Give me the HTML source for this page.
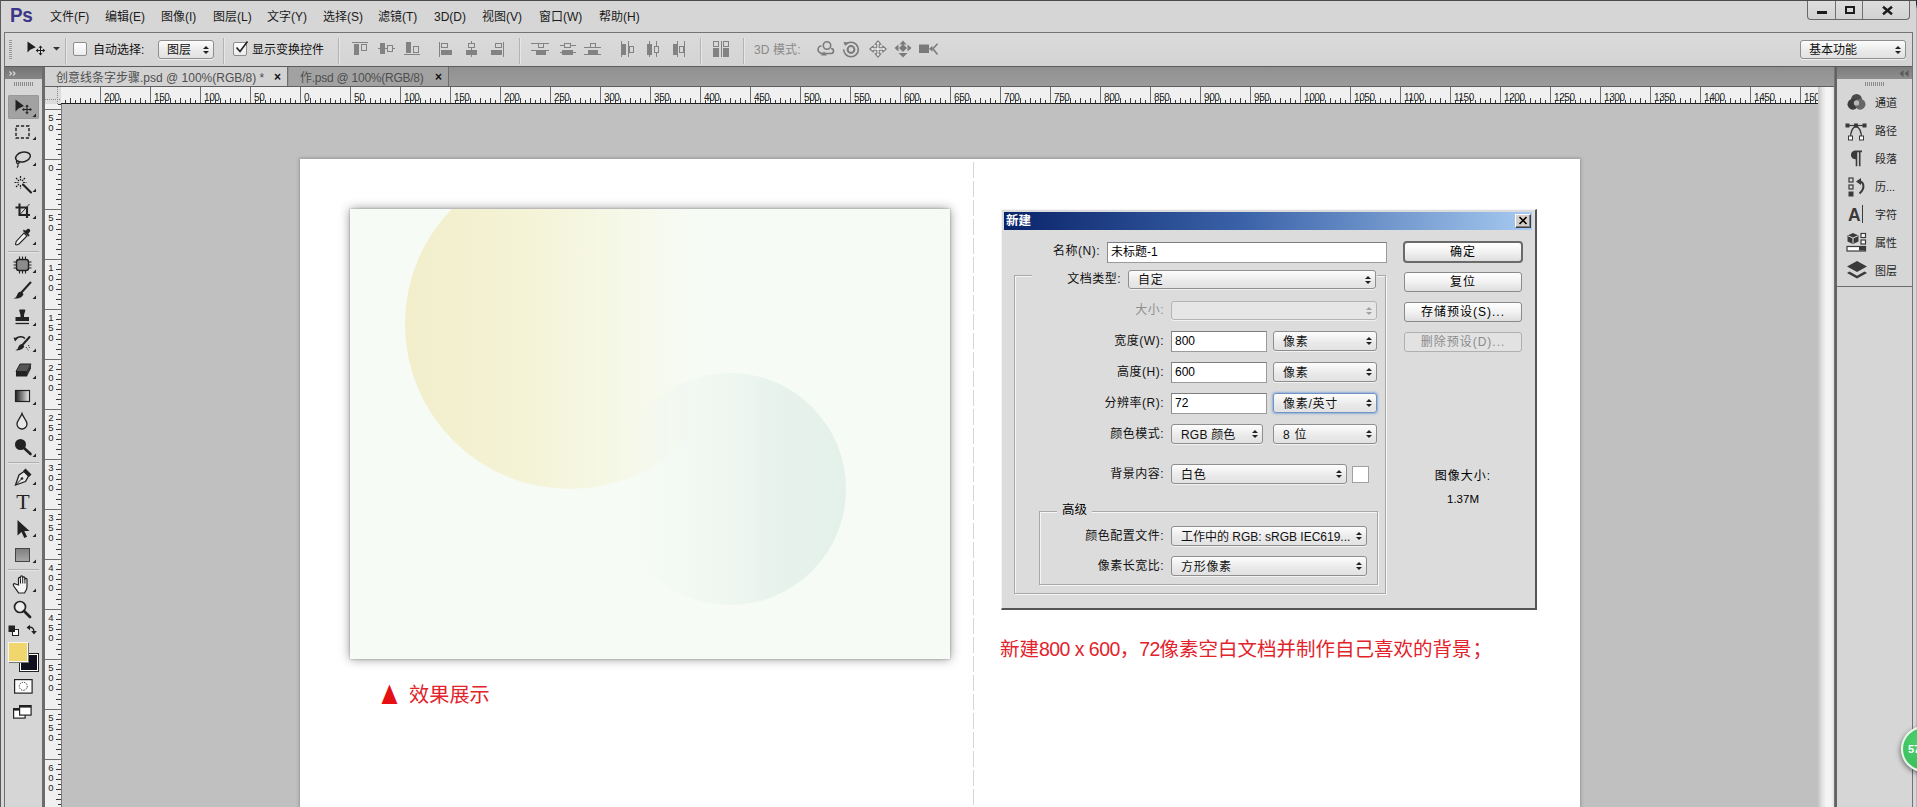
<!DOCTYPE html>
<html lang="zh-CN"><head><meta charset="utf-8"><title>Photoshop</title>
<style>
*{box-sizing:border-box;margin:0;padding:0}
html,body{width:1917px;height:807px;overflow:hidden}
body{position:relative;background:#d6d6d6;font-family:"Liberation Sans","Noto Sans CJK SC",sans-serif;font-size:12px;color:#000}
.abs,#frame i,#menubar span,#opt>*,#tabs>*,#tools>*,#right>*,#dlg>*,#canvas>*,#doc>*{position:absolute}
i{display:block;font-style:normal}
svg{position:absolute;overflow:visible}
/* frame */
#ftop{left:0;top:0;width:1917px;height:1px;background:#4a4a4a}
#fleft{left:0;top:0;width:1px;height:807px;background:#5a5a5a}
#fright{left:1916px;top:0;width:1px;height:807px;background:linear-gradient(#22224a 0,#22224a 4px,#b6b6c2 9px,#b6b6c2 100%)}
/* menubar */
#menubar{position:absolute;left:1px;top:1px;width:1915px;height:31px;background:#d6d6d6}
#ps{left:9px;top:1px;font:bold 21px/26px "Liberation Sans",sans-serif;color:#3b3687;letter-spacing:-0.5px;transform:scaleX(.9);transform-origin:0 0}
#menubar .m{top:8px;font-size:12px;line-height:16px;color:#1a1a1a;white-space:nowrap}
#winbtn{left:1806px;top:0;width:103px;height:19px;border:1px solid #686868;border-top:none;border-radius:0 0 4px 4px;background:linear-gradient(#dedede,#d2d2d2)}
/* options bar */
#opt{position:absolute;left:4px;top:32px;width:1909px;height:35px;border:1px solid #747474;border-bottom:1px solid #6a6a6a;background:linear-gradient(#dadada,#d4d4d4)}
#opt .sep{top:5px;width:1px;height:26px;background:#b4b4b4;box-shadow:1px 0 0 #e6e6e6}
#opt .t{font-size:12px;line-height:16px;white-space:nowrap;color:#111}
.dd{border:1px solid #8e8e8e;border-radius:3px;background:linear-gradient(#fdfdfd,#e9e9e9 60%,#e2e2e2);box-shadow:0 1px 0 rgba(255,255,255,.6)}
.cb{width:14px;height:14px;border:1px solid #8c8c8c;border-radius:2px;background:linear-gradient(#fff,#ececec)}
/* tabs */
#tabs{position:absolute;left:45px;top:67px;width:1790px;height:20px;background:linear-gradient(#909090,#9c9c9c);border-bottom:1px solid #5e5e5e}
#tabs .tab{top:0;height:19px;font-size:12px;line-height:20px;white-space:nowrap;color:#4e4e4e}
#tab1{left:0;width:243px;background:#d2d2d2;border-right:1px solid #6e6e6e}
#tab2{left:244px;width:160px;background:#a2a2a2;border-right:1px solid #6e6e6e;color:#454545}
/* rulers */
#corner{position:absolute;left:45px;top:87px;width:17px;height:17px;background:#dcdcdc}
#hruler{position:absolute;left:61px;top:87px;width:1757px;height:17px;overflow:hidden;border-bottom:1px solid #1e1e1e;
 background:
 repeating-linear-gradient(90deg,#3a3a3a 0 1px,transparent 1px 10px) 9px 11px/100% 5px no-repeat,
 repeating-linear-gradient(90deg,#3a3a3a 0 1px,transparent 1px 10px) 4px 13px/100% 3px no-repeat,
 #f0f0f0}
#hruler .hm{position:absolute;top:0;width:1px;height:17px;background:#6e6e6e}
#hruler .hl{position:absolute;top:6px;font-size:10px;line-height:10px;color:#222;letter-spacing:-0.4px}
#vruler{position:absolute;left:45px;top:104px;width:17px;height:703px;overflow:hidden;border-right:1px solid #7a7a7a;
 background:
 repeating-linear-gradient(180deg,#3a3a3a 0 1px,transparent 1px 10px) 11px 5px/5px 100% no-repeat,
 repeating-linear-gradient(180deg,#3a3a3a 0 1px,transparent 1px 10px) 13px 0px/3px 100% no-repeat,
 #f0f0f0}
#vruler .vm{position:absolute;left:0;width:17px;height:1px;background:#6e6e6e}
#vruler .vl{position:absolute;left:3px;font-size:9.5px;line-height:9.8px;color:#222;text-align:center;width:6px}
/* tools */
#tools{position:absolute;left:4px;top:66px;width:41px;height:741px;background:#d6d6d6;border-left:1px solid #6e6e6e;border-right:3px solid #6c6c6c}
#tools .hd{left:0;top:1px;width:37px;height:12px;background:linear-gradient(#747474,#868686)}
/* canvas */
#canvas{position:absolute;left:62px;top:104px;width:1756px;height:703px;background:#c0c0c0;overflow:hidden}
#doc{left:238px;top:55px;width:1280px;height:660px;background:#fff;box-shadow:0 0 3px 1px rgba(0,0,0,.22)}
#vscroll{position:absolute;left:1818px;top:87px;width:16px;height:720px;background:linear-gradient(90deg,#c4c4c4 0,#e4e4e4 28%,#f5f5f5 52%,#f4f4f4 82%,#e0e0e0 100%)}
/* right */
#rsep{position:absolute;left:1834px;top:66px;width:3px;height:741px;background:linear-gradient(90deg,#8c8c8c,#5e5e5e 34%,#686868)}
#right{position:absolute;left:1837px;top:66px;width:76px;height:741px;background:#d6d6d6;border-right:1px solid #747474}
#right .hd{left:0;top:1px;width:75px;height:12px;background:linear-gradient(#7c7c7c,#8e8e8e)}
#right .lbl{font-size:11px;line-height:14px;color:#262626;left:38px;white-space:nowrap}
/* dialog */
#dlg{left:939px;top:105px;width:536px;height:401px;background:#dcdcdc;border:1px solid #f4f4f4;border-right:2px solid #555;border-bottom:2px solid #555;font-size:12px}
#dlg .lb{white-space:nowrap;line-height:16px;text-align:right;color:#111;letter-spacing:.5px}
#dlg .in{background:#fff;border:1px solid #9a9a9a;border-top-color:#7d7d7d;border-left-color:#8a8a8a;line-height:18px;padding-left:3px;white-space:nowrap}
#dlg .dd{line-height:20px;padding-left:9px;white-space:nowrap;color:#111;letter-spacing:.7px}
#dlg .btn{border:1px solid #8a8a8a;border-radius:3px;background:linear-gradient(#fff,#f2f2f2 50%,#dedede);text-align:center;line-height:18px;white-space:nowrap;letter-spacing:1px}
.ud{position:absolute;right:4px;top:4.5px;width:6px;height:9px}
.ud:before,.ud:after{content:"";position:absolute;left:0;border-left:3px solid transparent;border-right:3px solid transparent}
.ud:before{top:0;border-bottom:3.2px solid #222}
.ud:after{top:5.2px;border-top:3.2px solid #222}
.red{color:#e3232b;white-space:nowrap}

</style></head>
<body>
<div id="frame"><i id="ftop"></i><i id="fleft"></i><i id="fright"></i></div>
<div id="menubar">
<span id="ps">Ps</span>
<span class="m" style="left:49px">文件(F)</span>
<span class="m" style="left:104px">编辑(E)</span>
<span class="m" style="left:160px">图像(I)</span>
<span class="m" style="left:212px">图层(L)</span>
<span class="m" style="left:266px">文字(Y)</span>
<span class="m" style="left:322px">选择(S)</span>
<span class="m" style="left:377px">滤镜(T)</span>
<span class="m" style="left:433px">3D(D)</span>
<span class="m" style="left:481px">视图(V)</span>
<span class="m" style="left:538px">窗口(W)</span>
<span class="m" style="left:598px">帮助(H)</span>
<span id="winbtn">
<i class="abs" style="left:27px;top:0;width:1px;height:18px;background:#707070"></i>
<i class="abs" style="left:54px;top:0;width:1px;height:18px;background:#707070"></i>
<i class="abs" style="left:9px;top:10px;width:10px;height:3px;background:#1c1c1c"></i>
<i class="abs" style="left:37px;top:5px;width:10px;height:8px;border:2px solid #1c1c1c"></i>
<svg style="left:74px;top:5px" width="11" height="9" viewBox="0 0 11 9"><path d="M1 0.800 L10 8.200 M10 0.800 L1 8.200" stroke="#1c1c1c" stroke-width="2.400" fill="none"/></svg>
</span>
</div>
<div id="opt">
<i style="left:4px;top:7px;width:3px;height:19px;background:repeating-linear-gradient(#9a9a9a 0 1px,transparent 1px 2px)"></i>
<svg style="left:22px;top:8px" width="20" height="16" viewBox="0 0 20 16"><path d="M0.5 0.5 L0.5 11.5 L3.2 8.8 L8.8 6.3 Z" fill="#1e1e1e"/><path d="M13.5 5.5 v8 M9.5 9.5 h8" stroke="#1e1e1e" stroke-width="1" fill="none"/><path d="M13.5 4.500 l-2 2.300 h4 z M13.500 14.500 l-2 -2.300 h4 z M8.800 9.500 l2.300 -2 v4 z M18.200 9.500 l-2.300 -2 v4 z" fill="#1e1e1e"/></svg>
<svg style="left:48px;top:14px" width="7" height="4" viewBox="0 0 7 4"><path d="M0 0 h7 l-3.5 3.6 z" fill="#333"/></svg>
<i class="sep" style="left:60px"></i>
<i class="cb" style="left:68px;top:9px"></i>
<span class="t" style="left:88px;top:9px">自动选择:</span>
<span class="dd t" style="left:153px;top:7px;width:56px;height:19px;line-height:19px;padding-left:8px">图层<i class="ud"></i></span>
<i class="sep" style="left:218px"></i>
<i class="cb" style="left:228px;top:9px"></i>
<svg style="left:230px;top:7px" width="14" height="14" viewBox="0 0 14 14"><path d="M1.5 7.5 L5 11.5 L12.5 1.5" stroke="#222" stroke-width="1.7" fill="none"/></svg>
<span class="t" style="left:247px;top:9px">显示变换控件</span>
<i class="sep" style="left:333px"></i>
<!-- align icons -->
<svg id="alg" style="left:-5px;top:-33px" width="1000" height="70" viewBox="0 0 1000 70" shape-rendering="crispEdges" fill="#828282" stroke="none">
<g>
<rect x="352" y="42" width="16" height="1"/><rect x="354" y="44" width="5" height="11"/><rect x="361.5" y="44.500" width="5" height="6" fill="none" stroke="#828282"/>
<rect x="378" y="48" width="17" height="1"/><rect x="380" y="43" width="5" height="11"/><rect x="387.5" y="45.500" width="5" height="6" fill="#d8d8d8" stroke="#828282"/>
<rect x="404" y="54" width="16" height="1"/><rect x="406" y="42" width="5" height="11"/><rect x="413.5" y="46.500" width="5" height="6" fill="none" stroke="#828282"/>
<rect x="439" y="42" width="1" height="15"/><rect x="441.5" y="43.500" width="6" height="4" fill="none" stroke="#828282"/><rect x="441" y="50" width="11" height="5"/>
<rect x="471" y="41" width="1" height="16"/><rect x="468.500" y="43.500" width="6" height="4" fill="#d8d8d8" stroke="#828282"/><rect x="466" y="50" width="11" height="5"/>
<rect x="503" y="42" width="1" height="15"/><rect x="495.500" y="43.500" width="6" height="4" fill="none" stroke="#828282"/><rect x="491" y="50" width="11" height="5"/>
<rect x="531" y="43" width="18" height="1"/><rect x="531" y="50" width="18" height="1"/><rect x="538.500" y="43.500" width="5" height="4" fill="none" stroke="#828282"/><rect x="536" y="51" width="10" height="4"/>
<rect x="560" y="45" width="16" height="1"/><rect x="560" y="52" width="16" height="1"/><rect x="564.500" y="43.500" width="6" height="4" fill="#d8d8d8" stroke="#828282"/><rect x="562" y="50" width="11" height="5"/>
<rect x="584" y="47" width="17" height="1"/><rect x="584" y="54" width="17" height="1"/><rect x="590.500" y="43.500" width="5" height="4" fill="none" stroke="#828282"/><rect x="588" y="50" width="10" height="4"/>
<rect x="621" y="41" width="1" height="16"/><rect x="628" y="41" width="1" height="16"/><rect x="622" y="44" width="4" height="11"/><rect x="629.500" y="46.500" width="4" height="6" fill="none" stroke="#828282"/>
<rect x="649" y="41" width="1" height="16"/><rect x="656" y="41" width="1" height="16"/><rect x="647" y="44" width="5" height="11"/><rect x="654.500" y="46.500" width="4" height="6" fill="#d8d8d8" stroke="#828282"/>
<rect x="677" y="41" width="1" height="16"/><rect x="684" y="41" width="1" height="16"/><rect x="673" y="44" width="4" height="11"/><rect x="679.500" y="46.500" width="4" height="6" fill="none" stroke="#828282"/>
<rect x="713.500" y="41.500" width="5" height="5" fill="none" stroke="#828282"/><rect x="713" y="48" width="6" height="9"/><rect x="721" y="41" width="1" height="16"/><rect x="723.500" y="41.500" width="5" height="5" fill="none" stroke="#828282"/><rect x="723" y="48" width="6" height="9"/>
</g>
</svg>
<i class="sep" style="left:514px"></i>
<i class="sep" style="left:695px"></i>
<i class="sep" style="left:738px"></i>
<span class="t" style="left:749px;top:9px;color:#8a8a8a;letter-spacing:0.1px">3D 模式:</span>
<!-- 3d icons -->
<svg style="left:811px;top:8px" width="18" height="15" viewBox="0 0 18 15"><g fill="none" stroke="#7a7a7a" stroke-width="1.6"><circle cx="11" cy="4.500" r="3.700"/><path d="M5.500 5 a3.500 3.500 0 1 0 0 7 M4 12.500 h11 a2.500 2.500 0 0 0 0 -5"/></g><path d="M5 14.500 l3 -4 3 4z" fill="#7a7a7a"/></svg>
<svg style="left:837px;top:7px" width="18" height="18" viewBox="0 0 18 18"><g fill="none" stroke="#7a7a7a"><circle cx="9" cy="9.500" r="7.300" stroke-width="1.600" stroke-dasharray="40 6" transform="rotate(-135 9 9.500)"/><circle cx="9" cy="9.500" r="3.400" stroke-width="2"/></g><path d="M1.500 2 l5 0.500 -3.500 3.500z" fill="#7a7a7a"/></svg>
<svg style="left:864px;top:7px" width="18" height="18" viewBox="0 0 18 18"><path d="M9 0.800 L12 4.300 H10.200 V7.800 H13.700 V6 L17.200 9 L13.700 12 V10.200 H10.200 V13.700 H12 L9 17.200 L6 13.700 H7.800 V10.200 H4.300 V12 L0.800 9 L4.300 6 V7.800 H7.800 V4.300 H6 Z" fill="#ececec" stroke="#7a7a7a" stroke-width="1.100" stroke-linejoin="round"/></svg>
<svg style="left:889px;top:7px" width="18" height="18" viewBox="0 0 18 18"><g fill="#7a7a7a"><path d="M9 0.500 l3.500 4 h-7z M9 17.500 l4.500 -4.500 h-9z M0.500 8 l4 -3.500 v7z M17.500 8 l-4 -3.500 v7z M9 4 l4 4 -4 4 -4 -4z"/></g></svg>
<svg style="left:914px;top:10px" width="20" height="13" viewBox="0 0 20 13"><rect x="0" y="1.500" width="10" height="8.500" fill="#7a7a7a"/><path d="M10 5.700 l3.500 -3 v6z" fill="#7a7a7a"/><path d="M18.500 0.800 L14 5.700 L18.500 11.500" fill="none" stroke="#7a7a7a" stroke-width="1.500"/></svg>
<span class="dd t" style="left:1795px;top:7px;width:106px;height:19px;line-height:19px;padding-left:8px">基本功能<i class="ud"></i></span>
</div>
<div id="tabs">
<span class="tab" id="tab1"><span class="abs" style="left:11px;top:1px">创意线条字步骤.psd @ 100%(RGB/8) *</span><span class="abs" style="left:229px;top:0;color:#111;font-size:12px;font-weight:bold">×</span></span>
<span class="tab" id="tab2"><span class="abs" style="left:11px;top:1px;letter-spacing:-0.25px">作.psd @ 100%(RGB/8)</span><span class="abs" style="left:146px;top:0;color:#111;font-size:12px;font-weight:bold">×</span></span>
</div>
<div id="corner"><i class="abs" style="left:12px;top:0;width:1px;height:17px;background:repeating-linear-gradient(#888 0 1px,transparent 1px 2px)"></i><i class="abs" style="left:0;top:12px;width:17px;height:1px;background:repeating-linear-gradient(90deg,#888 0 1px,transparent 1px 2px)"></i></div>
<div id="hruler"><i class="hm" style="left:39px"></i><span class="hl" style="left:43px">200</span><i class="hm" style="left:89px"></i><span class="hl" style="left:93px">150</span><i class="hm" style="left:139px"></i><span class="hl" style="left:143px">100</span><i class="hm" style="left:189px"></i><span class="hl" style="left:193px">50</span><i class="hm" style="left:239px"></i><span class="hl" style="left:243px">0</span><i class="hm" style="left:289px"></i><span class="hl" style="left:293px">50</span><i class="hm" style="left:339px"></i><span class="hl" style="left:343px">100</span><i class="hm" style="left:389px"></i><span class="hl" style="left:393px">150</span><i class="hm" style="left:439px"></i><span class="hl" style="left:443px">200</span><i class="hm" style="left:489px"></i><span class="hl" style="left:493px">250</span><i class="hm" style="left:539px"></i><span class="hl" style="left:543px">300</span><i class="hm" style="left:589px"></i><span class="hl" style="left:593px">350</span><i class="hm" style="left:639px"></i><span class="hl" style="left:643px">400</span><i class="hm" style="left:689px"></i><span class="hl" style="left:693px">450</span><i class="hm" style="left:739px"></i><span class="hl" style="left:743px">500</span><i class="hm" style="left:789px"></i><span class="hl" style="left:793px">550</span><i class="hm" style="left:839px"></i><span class="hl" style="left:843px">600</span><i class="hm" style="left:889px"></i><span class="hl" style="left:893px">650</span><i class="hm" style="left:939px"></i><span class="hl" style="left:943px">700</span><i class="hm" style="left:989px"></i><span class="hl" style="left:993px">750</span><i class="hm" style="left:1039px"></i><span class="hl" style="left:1043px">800</span><i class="hm" style="left:1089px"></i><span class="hl" style="left:1093px">850</span><i class="hm" style="left:1139px"></i><span class="hl" style="left:1143px">900</span><i class="hm" style="left:1189px"></i><span class="hl" style="left:1193px">950</span><i class="hm" style="left:1239px"></i><span class="hl" style="left:1243px">1000</span><i class="hm" style="left:1289px"></i><span class="hl" style="left:1293px">1050</span><i class="hm" style="left:1339px"></i><span class="hl" style="left:1343px">1100</span><i class="hm" style="left:1389px"></i><span class="hl" style="left:1393px">1150</span><i class="hm" style="left:1439px"></i><span class="hl" style="left:1443px">1200</span><i class="hm" style="left:1489px"></i><span class="hl" style="left:1493px">1250</span><i class="hm" style="left:1539px"></i><span class="hl" style="left:1543px">1300</span><i class="hm" style="left:1589px"></i><span class="hl" style="left:1593px">1350</span><i class="hm" style="left:1639px"></i><span class="hl" style="left:1643px">1400</span><i class="hm" style="left:1689px"></i><span class="hl" style="left:1693px">1450</span><i class="hm" style="left:1739px"></i><span class="hl" style="left:1743px">1500</span></div>
<div id="vruler"><i class="vm" style="top:5px"></i><span class="vl" style="top:9px">5<br>0</span><i class="vm" style="top:55px"></i><span class="vl" style="top:59px">0</span><i class="vm" style="top:105px"></i><span class="vl" style="top:109px">5<br>0</span><i class="vm" style="top:155px"></i><span class="vl" style="top:159px">1<br>0<br>0</span><i class="vm" style="top:205px"></i><span class="vl" style="top:209px">1<br>5<br>0</span><i class="vm" style="top:255px"></i><span class="vl" style="top:259px">2<br>0<br>0</span><i class="vm" style="top:305px"></i><span class="vl" style="top:309px">2<br>5<br>0</span><i class="vm" style="top:355px"></i><span class="vl" style="top:359px">3<br>0<br>0</span><i class="vm" style="top:405px"></i><span class="vl" style="top:409px">3<br>5<br>0</span><i class="vm" style="top:455px"></i><span class="vl" style="top:459px">4<br>0<br>0</span><i class="vm" style="top:505px"></i><span class="vl" style="top:509px">4<br>5<br>0</span><i class="vm" style="top:555px"></i><span class="vl" style="top:559px">5<br>0<br>0</span><i class="vm" style="top:605px"></i><span class="vl" style="top:609px">5<br>5<br>0</span><i class="vm" style="top:655px"></i><span class="vl" style="top:659px">6<br>0<br>0</span></div>
<div id="tools">
<i class="hd"></i>
<svg style="left:4px;top:5px" width="8" height="5" viewBox="0 0 8 5"><path d="M0.500 0.500 l2 2 -2 2 M4 0.500 l2 2 -2 2" fill="none" stroke="#d8d8d8" stroke-width="1.200"/></svg>
<i style="left:9px;top:16px;width:20px;height:4px;background:repeating-linear-gradient(90deg,#8a8a8a 0 1px,transparent 1px 2px)"></i>
<i style="left:3px;top:29px;width:31px;height:24px;background:#a2a2a2;border-radius:2px;box-shadow:inset 0 0 0 1px #999"></i>
<i style="left:3px;top:185px;width:31px;height:1px;background:#b0b0b0;box-shadow:0 1px 0 #e4e4e4"></i>
<i style="left:3px;top:396px;width:31px;height:1px;background:#b0b0b0;box-shadow:0 1px 0 #e4e4e4"></i>
<i style="left:3px;top:503px;width:31px;height:1px;background:#b0b0b0;box-shadow:0 1px 0 #e4e4e4"></i>
<svg style="left:6px;top:30px" width="22" height="22" viewBox="0 0 22 22"><path d="M4.500 3.500 v12 l3 -3 l5.500 -2.500z" fill="#222"/><path d="M16 10 v7 M12.500 13.500 h7" stroke="#222" stroke-width="1.100"/><path d="M16 8.500 l-1.800 2.200 h3.600z M16 18.500 l-1.800 -2.200 h3.600z M11 13.500 l2.200 -1.800 v3.600z M21 13.500 l-2.200 -1.800 v3.600z" fill="#222"/></svg><svg style="left:6px;top:55px" width="22" height="22" viewBox="0 0 22 22"><rect x="5" y="5" width="13" height="12" fill="none" stroke="#222" stroke-width="1.400" stroke-dasharray="3.200 1.800"/></svg><svg style="left:6px;top:83px" width="22" height="22" viewBox="0 0 22 22"><ellipse cx="12" cy="8" rx="7.500" ry="4.800" fill="none" stroke="#222" stroke-width="1.500" transform="rotate(-14 12 8)"/><path d="M6.500 11.500 c-2 1 -1 3.500 1 3 c1.500 -0.500 0.500 -2.500 -0.800 -1.500 M7 15 c0.500 1.500 0 2.500 -1 3.500" fill="none" stroke="#222" stroke-width="1.200"/></svg><svg style="left:6px;top:108px" width="22" height="22" viewBox="0 0 22 22"><path d="M12 10.500 L20 18.500" stroke="#222" stroke-width="2.100" stroke-linecap="round"/><path d="M9.500 2 v4.500 M9.500 11 v3.500 M3.500 8.500 h4 M12 8.500 h3.500 M5 4 l3 3 M14 4 l-3 3 M5 13 l3 -3" stroke="#222" stroke-width="1.200" stroke-dasharray="2 0.700"/></svg><svg style="left:6px;top:133px" width="22" height="22" viewBox="0 0 22 22"><path d="M8.500 4.500 v11.500 h10.500 M4.500 8.500 h11.500 v10.500" fill="none" stroke="#222" stroke-width="2.100"/><path d="M9 15.500 L18.500 5" stroke="#222" stroke-width="0.900"/></svg><svg style="left:6px;top:160px" width="22" height="22" viewBox="0 0 22 22"><path d="M13 7 l3 3 -8 8 -2.500 1 -1 -0.500 0.700 -3z" fill="#eee" stroke="#222" stroke-width="1.100"/><path d="M12 5 l5.500 5.500 1.200 -1.200 -1.500 -1.500 1.800 -2.300 c1 -1.500 -1 -3.500 -2.500 -2.500 l-2.300 1.800 -1.400 -1.300z" fill="#222"/></svg><svg style="left:6px;top:188px" width="22" height="22" viewBox="0 0 22 22"><rect x="5.500" y="5.500" width="12" height="11" rx="2.500" fill="#8c8c8c" stroke="#222" stroke-width="1.400"/><path d="M8.500 2.500 v3 M11.500 2.500 v3 M14.500 2.500 v3 M8.500 16.500 v3 M11.500 16.500 v3 M14.500 16.500 v3 M2.500 8 h3 M2.500 11 h3 M2.500 14 h3 M17.500 8 h3 M17.500 11 h3 M17.500 14 h3" stroke="#222" stroke-width="1.100"/></svg><svg style="left:6px;top:214px" width="22" height="22" viewBox="0 0 22 22"><path d="M19.500 2.500 L9.500 13.500" stroke="#222" stroke-width="2" stroke-linecap="round"/><path d="M10.500 12 l2 2 c-1 3.500 -5 5 -10 4.500 c3 -1 3 -2.500 4 -4.500 c1 -2 2.500 -2.500 4 -2z" fill="#222"/></svg><svg style="left:6px;top:241px" width="22" height="22" viewBox="0 0 22 22"><path d="M9 2.500 h4.500 c1 0 1 1 0.500 2 l-1 3.500 v2 h5 v4 h-13.500 v-4 h5 v-2 l-1 -3.500 c-0.500 -1 -0.500 -2 0.500 -2z" fill="#222"/><path d="M4.500 16.500 h13.500" stroke="#222" stroke-width="1.300"/></svg><svg style="left:6px;top:267px" width="22" height="22" viewBox="0 0 22 22"><path d="M18.500 4 L11 12.500" stroke="#222" stroke-width="2" stroke-linecap="round"/><path d="M11.500 11.500 l1.800 1.800 c-1 3 -4.500 4.500 -9 4 c3 -1 2.500 -2.500 3.500 -4 c1 -1.800 2.500 -2.300 3.700 -1.800z" fill="#222"/><path d="M4 6.500 c3 -3.500 8 -3.500 10 -1" fill="none" stroke="#222" stroke-width="1.300"/><path d="M2.500 4.500 l4.500 0.500 -3 3.500z" fill="#222"/><path d="M15 14 l2.500 3.500 M17.500 12 l1 3" stroke="#222" stroke-width="1" stroke-dasharray="1 1"/></svg><svg style="left:6px;top:293px" width="22" height="22" viewBox="0 0 22 22"><path d="M9 5 h11 l-4 7.500 h-11z" fill="#555" stroke="#222" stroke-width="1"/><path d="M5 12.500 h11 v5 h-11z" fill="#222"/><path d="M16 12.500 l4 -7.500 v4.500 l-4 8z" fill="#333"/></svg><svg style="left:6px;top:319px" width="22" height="22" viewBox="0 0 22 22"><defs><linearGradient id="gg" x1="0" x2="1"><stop offset="0" stop-color="#222"/><stop offset="1" stop-color="#eee"/></linearGradient></defs><rect x="4.500" y="5.500" width="14" height="11" fill="url(#gg)" stroke="#222" stroke-width="1.200"/></svg><svg style="left:6px;top:345px" width="22" height="22" viewBox="0 0 22 22"><path d="M11 2.500 c1.500 4.500 5 7 5 10.500 a5 5 0 0 1 -10 0 c0 -3.500 3.500 -6 5 -10.500z" fill="#e8e8e8" stroke="#222" stroke-width="1.300"/></svg><svg style="left:6px;top:370px" width="22" height="22" viewBox="0 0 22 22"><circle cx="9.500" cy="8.500" r="5.500" fill="#222"/><path d="M13 12 L19.500 18" stroke="#222" stroke-width="2.600" stroke-linecap="round"/></svg><svg style="left:6px;top:400px" width="22" height="22" viewBox="0 0 22 22"><path d="M13 5.500 l4.500 4.500 -3 5.500 -10 3.500 3.500 -10z" fill="#e8e8e8" stroke="#222" stroke-width="1.300"/><path d="M5 18.500 l5.500 -5.500" stroke="#222" stroke-width="1"/><circle cx="11" cy="12.500" r="1.300" fill="#222"/><path d="M14.500 2.500 l6 6 -2.500 2.500 -6 -6z" fill="#222"/></svg><span style="left:7px;top:421px;width:22px;text-align:center;font:22px/30px 'Liberation Serif',serif;color:#222">T</span><svg style="left:6px;top:452px" width="22" height="22" viewBox="0 0 22 22"><path d="M6.500 2 v15.500 l4 -3.500 2.800 6 2.800 -1.300 -2.800 -5.800 h5.200z" fill="#222"/></svg><svg style="left:6px;top:478px" width="22" height="22" viewBox="0 0 22 22"><defs><linearGradient id="rg" x1="0" y1="0" x2="0" y2="1"><stop offset="0" stop-color="#7e7e7e"/><stop offset="1" stop-color="#a8a8a8"/></linearGradient></defs><rect x="4.500" y="4.500" width="14" height="13" fill="url(#rg)" stroke="#444" stroke-width="1"/></svg><svg style="left:6px;top:507px" width="22" height="22" viewBox="0 0 22 22"><path d="M7.500 12 v-6.500 c0 -1.500 2 -1.500 2 0 v-1.500 c0 -1.500 2.200 -1.500 2.200 0 v1 c0 -1.500 2.200 -1.500 2.200 0 v1.500 c0 -1.500 2.100 -1.500 2.100 0 v7.500 c0 3 -1.500 4 -2.500 6 h-6 c-1 -2.500 -3.500 -4.500 -5 -7.500 c-0.800 -1.500 1 -2.500 2 -1.500z" fill="#f4f4f4" stroke="#222" stroke-width="1.200"/><path d="M9.500 5.500 v5 M11.700 5 v5.500 M13.900 5.500 v5" stroke="#222" stroke-width="1"/></svg><svg style="left:6px;top:532px" width="22" height="22" viewBox="0 0 22 22"><circle cx="9" cy="9" r="5.500" fill="#eee" stroke="#222" stroke-width="1.700"/><path d="M13 13 L19 19" stroke="#222" stroke-width="2.800" stroke-linecap="round"/></svg>
<svg style="left:0;top:0" width="37" height="741" viewBox="0 0 37 741"><path d="M31 51 v-3.500 l-3.500 3.500z" fill="#222"/><path d="M31 74 v-3.500 l-3.500 3.500z" fill="#222"/><path d="M31 100 v-3.500 l-3.500 3.500z" fill="#222"/><path d="M31 126 v-3.500 l-3.500 3.500z" fill="#222"/><path d="M31 153 v-3.500 l-3.500 3.500z" fill="#222"/><path d="M31 179 v-3.500 l-3.500 3.500z" fill="#222"/><path d="M31 207 v-3.500 l-3.500 3.500z" fill="#222"/><path d="M31 233 v-3.500 l-3.500 3.500z" fill="#222"/><path d="M31 260 v-3.500 l-3.500 3.500z" fill="#222"/><path d="M31 286 v-3.500 l-3.500 3.500z" fill="#222"/><path d="M31 313 v-3.500 l-3.500 3.500z" fill="#222"/><path d="M31 339 v-3.500 l-3.500 3.500z" fill="#222"/><path d="M31 365 v-3.500 l-3.500 3.500z" fill="#222"/><path d="M31 391 v-3.500 l-3.500 3.500z" fill="#222"/><path d="M31 419 v-3.500 l-3.500 3.500z" fill="#222"/><path d="M31 445 v-3.500 l-3.500 3.500z" fill="#222"/><path d="M31 471 v-3.500 l-3.500 3.500z" fill="#222"/><path d="M31 497 v-3.500 l-3.500 3.500z" fill="#222"/><path d="M31 526 v-3.500 l-3.500 3.500z" fill="#222"/></svg>
<svg style="left:3px;top:558px" width="30" height="14" viewBox="0 0 30 14"><rect x="4.500" y="5.500" width="6" height="6" fill="#fff" stroke="#222"/><rect x="0.500" y="1.500" width="6.500" height="6.500" fill="#222"/><path d="M20.500 3.500 c3.500 -1 5.500 1 5.500 4.500" fill="none" stroke="#222" stroke-width="1.300"/><path d="M18.500 3.500 l3.500 -2.800 v5.600z M26 10.500 l-2.800 -3.500 h5.600z" fill="#222"/></svg>
<i style="left:14px;top:587px;width:20px;height:19px;background:#11111d;border:1px solid #222;box-shadow:inset 0 0 0 1px #fff"></i>
<i style="left:3px;top:576px;width:20px;height:20px;background:#f0d66c;border:1px solid #f6f6f6;box-shadow:1px 1px 0 #777"></i>
<svg style="left:9px;top:613px" width="19" height="15" viewBox="0 0 19 15"><rect x="0.600" y="0.600" width="17.500" height="13.500" fill="#fff" stroke="#222" stroke-width="1.200"/><circle cx="9.300" cy="7.300" r="4" fill="none" stroke="#222" stroke-width="1" stroke-dasharray="1.200 1.200"/></svg>
<svg style="left:8px;top:639px" width="20" height="14" viewBox="0 0 20 14"><rect x="0.600" y="3.600" width="11.500" height="9.500" fill="#fff" stroke="#222" stroke-width="1.200"/><rect x="0.600" y="3.600" width="11.500" height="2" fill="#222"/><rect x="6.600" y="0.600" width="11.500" height="9.500" fill="#fff" stroke="#222" stroke-width="1.200"/><rect x="6.600" y="0.600" width="11.500" height="2" fill="#222"/></svg>
</div>
<div id="canvas">
<div id="doc">
<div id="pv" style="left:50px;top:50px;width:600px;height:450px;background:#f7fbf6;box-shadow:0 0 2px rgba(0,0,0,.3),0 0 10px rgba(0,0,0,.42);overflow:hidden">
<i class="abs" style="left:55px;top:-50px;width:330px;height:330px;border-radius:50%;background:linear-gradient(90deg,#f2eecb 0%,#f4f3d6 36%,rgba(245,245,220,.8) 55%,rgba(247,251,246,0) 90%)"></i>
<i class="abs" style="left:264px;top:164px;width:232px;height:232px;border-radius:50%;background:linear-gradient(90deg,rgba(247,251,246,0) 5%,rgba(238,246,240,.7) 42%,#e7f2ec 72%,#e4f0ea 100%)"></i>
</div>
<i id="dash" style="left:673px;top:3px;width:1px;height:660px;background:repeating-linear-gradient(#d6d6d6 0 16px,transparent 16px 19px)"></i>
<span class="red" style="left:76px;top:514px;font-size:31px;line-height:40px;color:#e60f14;transform:scale(.88,1.08);transform-origin:0 50%">▲</span><span class="red" style="left:109px;top:523px;font-size:20.200px;line-height:26px;font-weight:400">效果展示</span>
</div>
<div id="dlg">
<i id="dtitle" style="left:2px;top:2px;width:528px;height:18px;background:linear-gradient(90deg,#0a246a,#3a62a8 45%,#a6caf0)"></i>
<span style="left:4px;top:3px;color:#fff;font-weight:bold;font-size:12.500px;line-height:16px">新建</span>
<i style="left:513px;top:4px;width:16px;height:14px;background:#d4d0c8;border:1px solid #fff;border-right-color:#404040;border-bottom-color:#404040;box-shadow:inset -1px -1px 0 #808080"></i>
<svg style="left:517px;top:7px" width="8" height="7" viewBox="0 0 8 7"><path d="M0.500 0 L7.500 7 M7.500 0 L0.500 7" stroke="#000" stroke-width="1.600"/></svg>
<!-- group boxes -->
<i class="gb" style="left:12px;top:65px;width:372px;height:319px;border:1px solid #a8a8a8;box-shadow:1px 1px 0 #f6f6f6,inset 1px 1px 0 #f6f6f6"></i>
<i style="left:30px;top:63px;width:345px;height:5px;background:#dcdcdc"></i>
<i class="gb" style="left:37px;top:301px;width:339px;height:74px;border:1px solid #a8a8a8;box-shadow:1px 1px 0 #f6f6f6,inset 1px 1px 0 #f6f6f6"></i>
<span style="left:55px;top:292px;padding:0 5px;background:#dcdcdc;line-height:16px;font-size:12.500px">高级</span>
<!-- rows -->
<span class="lb" style="left:0;width:98px;top:33px">名称(N):</span>
<span class="in" style="left:105px;top:32px;width:280px;height:21px">未标题-1</span>
<span class="lb" style="left:0;width:119px;top:61px">文档类型:</span>
<span class="dd" style="left:126px;top:60px;width:248px;height:19px;line-height:19px">自定<i class="ud"></i></span>
<span class="lb" style="left:0;width:162px;top:92px;color:#8e8e8e">大小:</span>
<span class="dd" style="left:169px;top:91px;width:206px;height:19px;background:#e6e6e6;border-color:#b4b4b4"><i class="ud" style="opacity:.35"></i></span>
<span class="lb" style="left:0;width:162px;top:123px">宽度(W):</span>
<span class="in" style="left:169px;top:121px;width:96px;height:21px">800</span>
<span class="dd" style="left:271px;top:121px;width:104px;height:20px">像素<i class="ud"></i></span>
<span class="lb" style="left:0;width:162px;top:154px">高度(H):</span>
<span class="in" style="left:169px;top:152px;width:96px;height:21px">600</span>
<span class="dd" style="left:271px;top:152px;width:104px;height:20px">像素<i class="ud"></i></span>
<span class="lb" style="left:0;width:162px;top:185px">分辨率(R):</span>
<span class="in" style="left:169px;top:183px;width:96px;height:21px">72</span>
<span class="dd" style="left:271px;top:183px;width:104px;height:20px;border-color:#6f93c4;box-shadow:0 0 2px 1px rgba(120,160,215,.75)">像素/英寸<i class="ud"></i></span>
<span class="lb" style="left:0;width:162px;top:216px">颜色模式:</span>
<span class="dd" style="left:169px;top:214px;width:92px;height:20px;letter-spacing:.2px">RGB 颜色<i class="ud"></i></span>
<span class="dd" style="left:271px;top:214px;width:104px;height:20px">8 位<i class="ud"></i></span>
<span class="lb" style="left:0;width:162px;top:256px">背景内容:</span>
<span class="dd" style="left:169px;top:254px;width:176px;height:20px">白色<i class="ud"></i></span>
<i style="left:350px;top:256px;width:17px;height:17px;background:#fff;border:1px solid #a0a0a0"></i>
<span class="lb" style="left:0;width:162px;top:318px">颜色配置文件:</span>
<span class="dd" style="left:169px;top:316px;width:196px;height:20px;letter-spacing:0">工作中的 RGB: sRGB IEC619...<i class="ud"></i></span>
<span class="lb" style="left:0;width:162px;top:348px">像素长宽比:</span>
<span class="dd" style="left:169px;top:346px;width:196px;height:20px">方形像素<i class="ud"></i></span>
<!-- buttons -->
<span class="btn" style="left:401px;top:31px;width:120px;height:22px;border:2px solid #6a6a6a;border-radius:4px">确定</span>
<span class="btn" style="left:402px;top:62px;width:118px;height:20px">复位</span>
<span class="btn" style="left:402px;top:92px;width:118px;height:20px">存储预设(S)...</span>
<span class="btn" style="left:402px;top:122px;width:118px;height:20px;color:#8c8c8c;border-color:#b0b0b0;background:#e2e2e2">删除预设(D)...</span>
<span style="left:401px;width:120px;text-align:center;top:258px;line-height:16px;letter-spacing:1px">图像大小:</span>
<span style="left:401px;width:120px;text-align:center;top:281px;line-height:16px;font-size:11.500px">1.37M</span>
</div>
<span class="red" style="left:938px;top:532px;font-size:19.500px;line-height:26px;font-weight:400">新建<span style="letter-spacing:-0.55px">800 x 600</span>，<span style="letter-spacing:-0.7px">72</span>像素空白文档并制作自己喜欢的背景<span style="margin-left:1px">；</span></span>
</div>
<div id="vscroll"></div>
<div id="rsep"></div>
<div id="right">
<i class="hd"></i>
<svg style="left:62px;top:4px" width="10" height="7" viewBox="0 0 10 7"><path d="M4.500 0 v7 l-4 -3.500z M9.500 0 v7 l-4 -3.500z" fill="#5a5a5a"/></svg>
<i style="left:28px;top:16px;width:20px;height:4px;background:repeating-linear-gradient(90deg,#8a8a8a 0 1px,transparent 1px 2px)"></i>
<i style="left:0;top:220px;width:75px;height:1px;background:#6c6c6c"></i>
<!-- icons -->
<svg style="left:10px;top:27px" width="19" height="18" viewBox="0 0 21 20"><circle cx="10.500" cy="7" r="6" fill="#4a4a4a"/><circle cx="6.500" cy="12.500" r="6" fill="#3c3c3c"/><circle cx="14.500" cy="12.500" r="6" fill="#666"/><circle cx="10.500" cy="11" r="3" fill="#b8b8b8"/></svg>
<svg style="left:8px;top:55px" width="22" height="20" viewBox="0 0 22 20"><path d="M5.500 17 C5.500 2 16.500 2 16.500 17" fill="none" stroke="#3a3a3a" stroke-width="1.400"/><path d="M2 4.500 h18" stroke="#3a3a3a" stroke-width="1.200"/><rect x="0.500" y="2.500" width="4" height="4" fill="#3a3a3a"/><rect x="17.500" y="2.500" width="4" height="4" fill="#3a3a3a"/><rect x="9" y="2.500" width="4" height="4" fill="#3a3a3a"/><rect x="3.500" y="15" width="4" height="4" fill="#fff" stroke="#3a3a3a"/><rect x="14.500" y="15" width="4" height="4" fill="#fff" stroke="#3a3a3a"/></svg>
<svg style="left:12px;top:84px" width="14" height="17" viewBox="0 0 14 17"><path d="M6 0.500 h7 v1.800 h-1.500 v14 h-1.600 v-14 h-1.600 v14 h-1.600 v-7 a4.400 4.400 0 0 1 -0.700 -8.800z" fill="#3a3a3a"/></svg>
<svg style="left:11px;top:111px" width="18" height="20" viewBox="0 0 18 20"><rect x="1" y="1" width="4" height="4" fill="none" stroke="#3a3a3a" stroke-width="1.200"/><rect x="1" y="8" width="4" height="4" fill="none" stroke="#3a3a3a" stroke-width="1.200"/><rect x="0.500" y="14.500" width="5" height="5" fill="#3a3a3a"/><path d="M11 4.500 c5 0 6.500 7 0.500 12" fill="none" stroke="#3a3a3a" stroke-width="2"/><path d="M8 4.500 l5 -3.500 v7z" fill="#3a3a3a"/></svg>
<span style="left:11px;top:138px;font:bold 17.500px/22px 'Liberation Sans',sans-serif;color:#3a3a3a">A</span>
<i style="left:25px;top:139px;width:1px;height:18px;background:#3a3a3a"></i>
<svg style="left:9px;top:166px" width="21" height="20" viewBox="0 0 21 20"><path d="M7 1 l5.500 2.500 v6 l-5.500 2.500 -5.500 -2.500 v-6z" fill="#3a3a3a"/><path d="M2 3.800 l5 2.200 5 -2.200 M7 6 v5.500" fill="none" stroke="#ddd" stroke-width="1"/><rect x="15" y="1.500" width="4.500" height="4" fill="#fff" stroke="#3a3a3a" stroke-width="1.200"/><rect x="15" y="8" width="4.500" height="4" fill="#fff" stroke="#3a3a3a" stroke-width="1.200"/><rect x="1" y="14.500" width="18.500" height="4.500" fill="#fff" stroke="#3a3a3a" stroke-width="1.200"/><rect x="13" y="15" width="6" height="3.500" fill="#3a3a3a"/></svg>
<svg style="left:9px;top:194px" width="22" height="20" viewBox="0 0 22 20"><path d="M11 1 l10 5.500 -10 5.500 -10 -5.500z" fill="#3a3a3a"/><path d="M3.500 11.500 l-2.500 1.500 10 5.500 10 -5.500 -2.500 -1.500 -7.500 4.200z" fill="#3a3a3a"/></svg>
<span class="lbl" style="top:30px">通道</span>
<span class="lbl" style="top:58px">路径</span>
<span class="lbl" style="top:86px">段落</span>
<span class="lbl" style="top:114px">历...</span>
<span class="lbl" style="top:142px">字符</span>
<span class="lbl" style="top:170px">属性</span>
<span class="lbl" style="top:198px">图层</span>
</div>
<i class="abs" style="left:1913px;top:1px;width:3px;height:806px;background:#d6d6d6"></i>
<i class="abs" style="left:5px;top:66px;width:1907px;height:1px;background:#5c5c5c"></i>
<div class="abs" id="badge" style="left:1901px;top:726px;width:46px;height:46px;border-radius:50%;background:radial-gradient(circle at 40% 35%,#4fd070,#2fb851);border:2px solid #e6f7ea;box-shadow:-1px 2px 5px rgba(0,0,0,.45);color:#fff;font:bold 11px/42px 'Liberation Sans',sans-serif;padding-left:5px">57</div>
</body></html>
